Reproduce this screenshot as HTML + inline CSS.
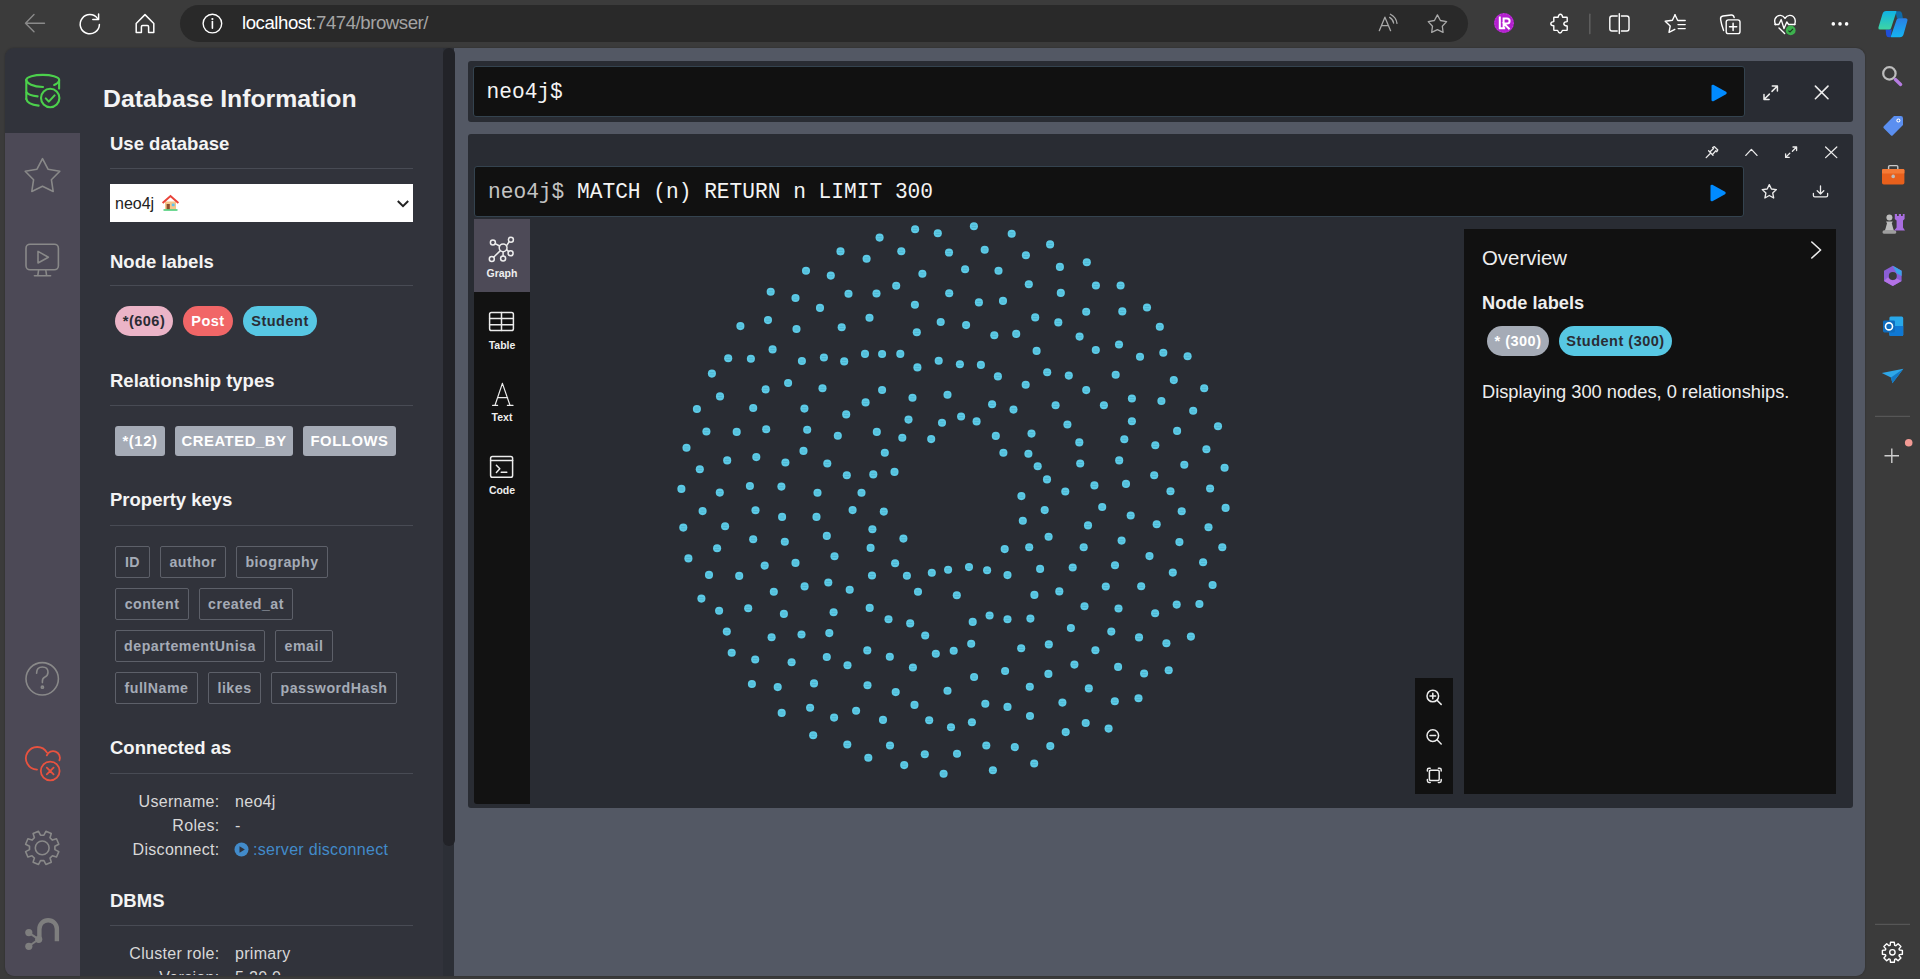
<!DOCTYPE html>
<html><head><meta charset="utf-8">
<style>
*{box-sizing:border-box}
html,body{margin:0;padding:0}
body{width:1920px;height:979px;overflow:hidden;position:relative;background:#3b3b3b;font-family:"Liberation Sans",sans-serif;color:#f4f4f4}
.a{position:absolute}
svg{position:absolute;overflow:visible}
/* chrome */
#addr{left:180px;top:5px;width:1288px;height:37px;border-radius:18.5px;background:#292929}
#url{left:242px;top:12px;font-size:18.6px;letter-spacing:-0.45px;line-height:22px;color:#fff;white-space:nowrap}
#url span{color:#a4a4a4}
/* app */
#app{left:5.2px;top:48px;width:1859.8px;height:927.5px;border-radius:9px;overflow:hidden;box-shadow:0 0 2px rgba(0,0,0,0.3)}
#mainbg{left:449px;top:0;width:1411px;height:928px;background:#535864}
#nav{left:0;top:85px;width:75px;height:843px;background:#4c4956}
#navact{left:0;top:0;width:75px;height:85px;background:#31333b}
#drawer{left:75px;top:0;width:363px;height:928px;background:#31333b}
#sbtrack{left:438px;top:0;width:11px;height:928px;background:#2c2f36}
#sbthumb{left:438px;top:0;width:11.5px;height:798px;border-radius:6px;background:#222328}
.h1{font-weight:bold;font-size:24.8px;color:#f4f4f4;white-space:nowrap}
.h2{font-weight:bold;font-size:18.5px;color:#f4f4f4;white-space:nowrap}
.hr{height:1px;background:#484b54;width:303px;left:105px}
.pill{height:30px;border-radius:15px;font-weight:bold;font-size:14.5px;letter-spacing:0.5px;line-height:30px;text-align:center;white-space:nowrap}
.rel{height:30px;border-radius:3px;font-weight:bold;font-size:14.8px;letter-spacing:0.6px;line-height:30px;text-align:center;color:#fff;background:#a5abb6;white-space:nowrap}
.key{height:31.5px;border-radius:2px;border:1px solid #5d6069;font-weight:bold;font-size:14.2px;letter-spacing:0.5px;line-height:31px;text-align:center;color:#a5abb6;white-space:nowrap}
.kv{font-size:16px;letter-spacing:0.3px;color:#d8d8d8;white-space:nowrap;line-height:20px}
.mono{font-family:"Liberation Mono",monospace;font-size:21.2px;line-height:26px;color:#f4f4f4;white-space:nowrap}
.tab{width:56px;text-align:center;font-size:10.5px;font-weight:bold;color:#eee;line-height:14px}
.kl{text-align:right;width:121.5px}
</style></head><body>
<!-- browser chrome -->
<div id="addr" class="a"></div>
<div id="url" class="a">localhost<span>:7474/browser/</span></div>

<div id="app" class="a">
  <div id="mainbg" class="a"></div>
  <div id="nav" class="a"></div>
  <div id="navact" class="a"></div>
  <div id="drawer" class="a"></div>
  <div id="sbtrack" class="a"></div>
  <div id="sbthumb" class="a"></div>
</div>

<div class="a" style="left:0;top:0;width:443px;height:975px;overflow:hidden">
<div class="a h1" style="left:103px;top:85px">Database Information</div>
<div class="a h2" style="left:110px;top:133px">Use database</div>
<div class="a hr" style="left:110px;top:168px"></div>
<div class="a" style="left:110px;top:184px;width:303px;height:38px;background:#fff"></div>
<div class="a" style="left:115px;top:194px;font-size:16px;color:#222;line-height:20px">neo4j</div>
<svg style="left:162px;top:195px" width="17" height="16" viewBox="0 0 17 16"><rect x="3" y="6.5" width="11" height="8" fill="#f6c68a"/><path d="M0.6 8 L8.5 1 L16.4 8" fill="none" stroke="#e9443a" stroke-width="2"/><rect x="4.6" y="9" width="3.2" height="5.6" fill="#8a4f2e"/><rect x="9.8" y="8.6" width="2.8" height="2.6" fill="#5ec3ee"/><rect x="1.5" y="14.2" width="14" height="1.6" fill="#4ccf7a"/></svg>
<svg style="left:396px;top:199px" width="14" height="10" viewBox="0 0 14 10"><path d="M1.8 2 L7 7.2 L12.2 2" fill="none" stroke="#222" stroke-width="2"/></svg>

<div class="a h2" style="left:110px;top:250.5px">Node labels</div>
<div class="a hr" style="left:110px;top:285px"></div>
<div class="a pill" style="left:115px;top:306px;width:58px;background:#ebb4c7;color:#2a2c34">*(606)</div>
<div class="a pill" style="left:183px;top:306px;width:50px;background:#f16667;color:#fff">Post</div>
<div class="a pill" style="left:243px;top:306px;width:74px;background:#57c7e3;color:#2a2c34">Student</div>

<div class="a h2" style="left:110px;top:370px">Relationship types</div>
<div class="a hr" style="left:110px;top:405px"></div>
<div class="a rel" style="left:115px;top:426px;width:50px">*(12)</div>
<div class="a rel" style="left:175px;top:426px;width:118px">CREATED_BY</div>
<div class="a rel" style="left:303px;top:426px;width:93px">FOLLOWS</div>

<div class="a h2" style="left:110px;top:489px">Property keys</div>
<div class="a hr" style="left:110px;top:525px"></div>
<div class="a key" style="left:115px;top:546px;width:35px">ID</div>
<div class="a key" style="left:160px;top:546px;width:66px">author</div>
<div class="a key" style="left:236px;top:546px;width:92px">biography</div>
<div class="a key" style="left:115px;top:588px;width:74px">content</div>
<div class="a key" style="left:199px;top:588px;width:94px">created_at</div>
<div class="a key" style="left:115px;top:630px;width:150px">departementUnisa</div>
<div class="a key" style="left:275px;top:630px;width:58px">email</div>
<div class="a key" style="left:115px;top:672px;width:83px">fullName</div>
<div class="a key" style="left:208px;top:672px;width:53px">likes</div>
<div class="a key" style="left:271px;top:672px;width:126px">passwordHash</div>

<div class="a h2" style="left:110px;top:737px">Connected as</div>
<div class="a hr" style="left:110px;top:773px"></div>
<div class="a kv kl" style="left:98px;top:792px">Username:</div>
<div class="a kv" style="left:235px;top:792px">neo4j</div>
<div class="a kv kl" style="left:98px;top:816px">Roles:</div>
<div class="a kv" style="left:235px;top:816px">-</div>
<div class="a kv kl" style="left:98px;top:840px">Disconnect:</div>
<svg style="left:234px;top:842px" width="15" height="15" viewBox="0 0 15 15"><circle cx="7.5" cy="7.5" r="7" fill="#428bca"/><path d="M5.5 4.2 L10.8 7.5 L5.5 10.8Z" fill="#31333b"/></svg>
<div class="a kv" style="left:253px;top:840px;color:#428bca">:server disconnect</div>

<div class="a h2" style="left:110px;top:890px">DBMS</div>
<div class="a hr" style="left:110px;top:925px"></div>
<div class="a kv kl" style="left:98px;top:944px">Cluster role:</div>
<div class="a kv" style="left:235px;top:944px">primary</div>
<div class="a kv kl" style="left:98px;top:968px">Version:</div>
<div class="a kv" style="left:235px;top:968px">5.20.0</div>

</div>
<!-- MAIN -->
<div class="a" style="left:468px;top:61px;width:1385px;height:60.5px;background:#292c33;border-radius:3px"></div>
<div class="a" style="left:473px;top:66px;width:1271.5px;height:50.5px;background:#111;border:1px solid #34434f;border-radius:3px"></div>
<div class="a mono" style="left:486.5px;top:78.5px;">neo4j$</div>
<svg style="left:1711px;top:84px" width="16" height="18" viewBox="0 0 16 18"><path d="M1.8 2 L1.8 16 L14.4 9 Z" fill="#018bff" stroke="#018bff" stroke-width="2.6" stroke-linejoin="round"/></svg>

<div class="a" style="left:468px;top:134px;width:1385px;height:674px;background:#292c33;border-radius:3px"></div>
<div class="a" style="left:474px;top:166px;width:1269.5px;height:51px;background:#111;border:1px solid #34434f;border-radius:3px"></div>
<div class="a mono" style="left:488px;top:179px;"><span style="color:#c3c3c3">neo4j$</span> MATCH (n) RETURN n LIMIT 300</div>
<svg style="left:1710px;top:184px" width="16" height="18" viewBox="0 0 16 18"><path d="M1.8 2 L1.8 16 L14.4 9 Z" fill="#018bff" stroke="#018bff" stroke-width="2.6" stroke-linejoin="round"/></svg>

<div class="a" style="left:474px;top:219px;width:56px;height:585px;background:#121212;border-radius:0 0 0 3px"></div>
<div class="a" style="left:474px;top:219px;width:56px;height:73px;background:#4d4a57"></div>
<div class="a tab" style="left:474px;top:266px">Graph</div>
<div class="a tab" style="left:474px;top:338px">Table</div>
<div class="a tab" style="left:474px;top:410px">Text</div>
<div class="a tab" style="left:474px;top:483px">Code</div>

<div class="a" style="left:1464px;top:229px;width:372px;height:565px;background:#111"></div>
<div class="a" style="left:1482px;top:245.5px;font-size:20.4px;line-height:24px;color:#eee">Overview</div>
<div class="a" style="left:1482px;top:292px;font-size:18.2px;font-weight:bold;line-height:22px;color:#eee">Node labels</div>
<div class="a pill" style="left:1487px;top:326px;width:62px;background:#a5abb6;color:#fff">* (300)</div>
<div class="a pill" style="left:1559px;top:326px;width:113px;background:#57c7e3;color:#2a2c34">Student (300)</div>
<div class="a" style="left:1482px;top:380.5px;font-size:18.25px;line-height:22px;color:#eee;white-space:nowrap">Displaying 300 nodes, 0 relationships.</div>

<div class="a" style="left:1415px;top:678px;width:38px;height:116px;background:#111"></div>

<!-- NODES -->
<svg style="left:0;top:0" width="1920" height="979" viewBox="0 0 1920 979">
<g fill="#5ccae6"><circle cx="840.5" cy="251.4" r="4.05"/><circle cx="806.0" cy="270.8" r="4.05"/><circle cx="830.8" cy="275.6" r="4.05"/><circle cx="770.7" cy="291.7" r="4.05"/><circle cx="795.5" cy="298.0" r="4.05"/><circle cx="848.5" cy="293.7" r="4.05"/><circle cx="820.0" cy="307.9" r="4.05"/><circle cx="740.4" cy="326.1" r="4.05"/><circle cx="768.0" cy="320.1" r="4.05"/><circle cx="796.5" cy="329.0" r="4.05"/><circle cx="841.7" cy="327.3" r="4.05"/><circle cx="772.6" cy="349.4" r="4.05"/><circle cx="728.2" cy="358.3" r="4.05"/><circle cx="750.9" cy="358.7" r="4.05"/><circle cx="801.9" cy="361.0" r="4.05"/><circle cx="823.9" cy="357.5" r="4.05"/><circle cx="844.2" cy="361.4" r="4.05"/><circle cx="711.9" cy="373.6" r="4.05"/><circle cx="788.1" cy="383.0" r="4.05"/><circle cx="765.6" cy="389.4" r="4.05"/><circle cx="822.5" cy="388.2" r="4.05"/><circle cx="720.0" cy="396.4" r="4.05"/><circle cx="879.6" cy="237.6" r="4.05"/><circle cx="915.1" cy="229.3" r="4.05"/><circle cx="937.8" cy="233.3" r="4.05"/><circle cx="973.9" cy="226.3" r="4.05"/><circle cx="1011.7" cy="233.7" r="4.05"/><circle cx="1050.1" cy="244.4" r="4.05"/><circle cx="901.3" cy="251.2" r="4.05"/><circle cx="866.6" cy="258.8" r="4.05"/><circle cx="949.0" cy="252.5" r="4.05"/><circle cx="984.7" cy="249.8" r="4.05"/><circle cx="1025.9" cy="255.3" r="4.05"/><circle cx="922.4" cy="273.7" r="4.05"/><circle cx="965.1" cy="269.2" r="4.05"/><circle cx="998.5" cy="270.8" r="4.05"/><circle cx="1028.8" cy="284.2" r="4.05"/><circle cx="896.2" cy="285.7" r="4.05"/><circle cx="876.5" cy="293.5" r="4.05"/><circle cx="949.2" cy="293.3" r="4.05"/><circle cx="914.9" cy="304.8" r="4.05"/><circle cx="978.9" cy="302.4" r="4.05"/><circle cx="1003.0" cy="300.9" r="4.05"/><circle cx="869.5" cy="317.8" r="4.05"/><circle cx="940.7" cy="322.0" r="4.05"/><circle cx="966.1" cy="325.1" r="4.05"/><circle cx="1035.2" cy="317.4" r="4.05"/><circle cx="916.8" cy="332.3" r="4.05"/><circle cx="994.3" cy="335.2" r="4.05"/><circle cx="1016.2" cy="333.9" r="4.05"/><circle cx="865.0" cy="353.9" r="4.05"/><circle cx="882.1" cy="354.0" r="4.05"/><circle cx="900.3" cy="353.9" r="4.05"/><circle cx="938.7" cy="360.8" r="4.05"/><circle cx="917.4" cy="367.4" r="4.05"/><circle cx="959.9" cy="364.3" r="4.05"/><circle cx="980.9" cy="364.9" r="4.05"/><circle cx="1036.6" cy="350.9" r="4.05"/><circle cx="997.9" cy="376.4" r="4.05"/><circle cx="1047.2" cy="372.3" r="4.05"/><circle cx="1025.7" cy="384.7" r="4.05"/><circle cx="882.1" cy="390.0" r="4.05"/><circle cx="912.5" cy="397.7" r="4.05"/><circle cx="947.5" cy="394.8" r="4.05"/><circle cx="865.6" cy="402.4" r="4.05"/><circle cx="992.1" cy="404.3" r="4.05"/><circle cx="1059.9" cy="266.9" r="4.05"/><circle cx="1086.8" cy="262.2" r="4.05"/><circle cx="1095.9" cy="285.5" r="4.05"/><circle cx="1120.6" cy="285.5" r="4.05"/><circle cx="1060.8" cy="292.9" r="4.05"/><circle cx="1147.0" cy="307.5" r="4.05"/><circle cx="1086.2" cy="311.7" r="4.05"/><circle cx="1122.3" cy="311.4" r="4.05"/><circle cx="1058.3" cy="322.4" r="4.05"/><circle cx="1159.8" cy="326.7" r="4.05"/><circle cx="1079.6" cy="336.6" r="4.05"/><circle cx="1119.0" cy="344.5" r="4.05"/><circle cx="1095.8" cy="350.0" r="4.05"/><circle cx="1140.0" cy="356.8" r="4.05"/><circle cx="1163.3" cy="352.7" r="4.05"/><circle cx="1187.6" cy="356.2" r="4.05"/><circle cx="1068.8" cy="375.6" r="4.05"/><circle cx="1115.7" cy="374.8" r="4.05"/><circle cx="1173.8" cy="380.1" r="4.05"/><circle cx="1086.2" cy="390.1" r="4.05"/><circle cx="1204.2" cy="388.2" r="4.05"/><circle cx="1131.9" cy="398.5" r="4.05"/><circle cx="1161.4" cy="401.0" r="4.05"/><circle cx="1103.9" cy="405.3" r="4.05"/><circle cx="1055.6" cy="405.3" r="4.05"/><circle cx="696.9" cy="409.0" r="4.05"/><circle cx="753.2" cy="408.0" r="4.05"/><circle cx="804.4" cy="408.6" r="4.05"/><circle cx="846.2" cy="414.4" r="4.05"/><circle cx="706.4" cy="431.5" r="4.05"/><circle cx="736.7" cy="431.9" r="4.05"/><circle cx="766.2" cy="429.2" r="4.05"/><circle cx="807.2" cy="429.7" r="4.05"/><circle cx="837.8" cy="435.8" r="4.05"/><circle cx="686.5" cy="447.8" r="4.05"/><circle cx="803.5" cy="450.9" r="4.05"/><circle cx="727.2" cy="460.4" r="4.05"/><circle cx="756.3" cy="457.1" r="4.05"/><circle cx="785.4" cy="462.5" r="4.05"/><circle cx="827.3" cy="463.5" r="4.05"/><circle cx="699.8" cy="469.3" r="4.05"/><circle cx="846.8" cy="475.3" r="4.05"/><circle cx="681.4" cy="488.9" r="4.05"/><circle cx="719.8" cy="492.6" r="4.05"/><circle cx="749.9" cy="486.0" r="4.05"/><circle cx="781.4" cy="486.6" r="4.05"/><circle cx="817.5" cy="492.8" r="4.05"/><circle cx="861.5" cy="492.8" r="4.05"/><circle cx="702.6" cy="511.1" r="4.05"/><circle cx="755.5" cy="510.3" r="4.05"/><circle cx="782.1" cy="516.9" r="4.05"/><circle cx="816.5" cy="516.9" r="4.05"/><circle cx="852.6" cy="510.1" r="4.05"/><circle cx="683.3" cy="527.6" r="4.05"/><circle cx="725.1" cy="526.2" r="4.05"/><circle cx="753.2" cy="539.2" r="4.05"/><circle cx="784.8" cy="541.7" r="4.05"/><circle cx="826.8" cy="535.9" r="4.05"/><circle cx="717.1" cy="548.3" r="4.05"/><circle cx="688.4" cy="558.4" r="4.05"/><circle cx="764.7" cy="565.6" r="4.05"/><circle cx="795.5" cy="562.9" r="4.05"/><circle cx="834.5" cy="556.3" r="4.05"/><circle cx="709.0" cy="574.9" r="4.05"/><circle cx="739.2" cy="575.9" r="4.05"/><circle cx="773.8" cy="591.8" r="4.05"/><circle cx="804.6" cy="586.4" r="4.05"/><circle cx="828.3" cy="582.5" r="4.05"/><circle cx="849.7" cy="589.8" r="4.05"/><circle cx="1013.5" cy="409.6" r="4.05"/><circle cx="908.5" cy="419.6" r="4.05"/><circle cx="942.0" cy="422.7" r="4.05"/><circle cx="961.1" cy="416.5" r="4.05"/><circle cx="976.6" cy="421.4" r="4.05"/><circle cx="876.8" cy="431.9" r="4.05"/><circle cx="902.3" cy="437.7" r="4.05"/><circle cx="931.2" cy="439.1" r="4.05"/><circle cx="995.8" cy="435.9" r="4.05"/><circle cx="1031.5" cy="433.6" r="4.05"/><circle cx="884.8" cy="452.8" r="4.05"/><circle cx="1003.4" cy="452.8" r="4.05"/><circle cx="1028.4" cy="453.8" r="4.05"/><circle cx="1037.7" cy="466.2" r="4.05"/><circle cx="873.3" cy="474.4" r="4.05"/><circle cx="894.5" cy="471.9" r="4.05"/><circle cx="1047.0" cy="479.4" r="4.05"/><circle cx="1021.4" cy="496.1" r="4.05"/><circle cx="883.8" cy="511.6" r="4.05"/><circle cx="1044.7" cy="510.1" r="4.05"/><circle cx="1022.8" cy="520.8" r="4.05"/><circle cx="872.4" cy="529.3" r="4.05"/><circle cx="903.4" cy="538.6" r="4.05"/><circle cx="1048.6" cy="536.7" r="4.05"/><circle cx="870.6" cy="547.9" r="4.05"/><circle cx="1004.7" cy="549.1" r="4.05"/><circle cx="1029.2" cy="547.2" r="4.05"/><circle cx="895.1" cy="563.3" r="4.05"/><circle cx="872.0" cy="575.5" r="4.05"/><circle cx="906.9" cy="575.7" r="4.05"/><circle cx="931.8" cy="572.8" r="4.05"/><circle cx="948.1" cy="569.7" r="4.05"/><circle cx="969.0" cy="567.1" r="4.05"/><circle cx="987.1" cy="570.2" r="4.05"/><circle cx="1007.5" cy="575.1" r="4.05"/><circle cx="1040.1" cy="568.9" r="4.05"/><circle cx="918.0" cy="591.8" r="4.05"/><circle cx="956.8" cy="595.3" r="4.05"/><circle cx="1034.4" cy="594.9" r="4.05"/><circle cx="1193.2" cy="410.7" r="4.05"/><circle cx="1067.4" cy="424.5" r="4.05"/><circle cx="1131.9" cy="421.2" r="4.05"/><circle cx="1177.1" cy="430.9" r="4.05"/><circle cx="1218.0" cy="426.2" r="4.05"/><circle cx="1079.3" cy="442.4" r="4.05"/><circle cx="1124.3" cy="439.2" r="4.05"/><circle cx="1155.3" cy="445.3" r="4.05"/><circle cx="1206.4" cy="449.3" r="4.05"/><circle cx="1080.2" cy="463.5" r="4.05"/><circle cx="1119.2" cy="460.4" r="4.05"/><circle cx="1184.3" cy="464.7" r="4.05"/><circle cx="1224.6" cy="467.8" r="4.05"/><circle cx="1154.2" cy="475.3" r="4.05"/><circle cx="1094.4" cy="485.4" r="4.05"/><circle cx="1126.0" cy="483.9" r="4.05"/><circle cx="1065.3" cy="491.5" r="4.05"/><circle cx="1170.5" cy="491.3" r="4.05"/><circle cx="1210.1" cy="488.5" r="4.05"/><circle cx="1102.2" cy="507.0" r="4.05"/><circle cx="1130.7" cy="515.5" r="4.05"/><circle cx="1181.7" cy="511.2" r="4.05"/><circle cx="1225.6" cy="507.9" r="4.05"/><circle cx="1088.0" cy="525.4" r="4.05"/><circle cx="1156.7" cy="524.3" r="4.05"/><circle cx="1208.5" cy="527.2" r="4.05"/><circle cx="1121.6" cy="540.6" r="4.05"/><circle cx="1083.7" cy="547.2" r="4.05"/><circle cx="1179.4" cy="542.1" r="4.05"/><circle cx="1222.3" cy="547.2" r="4.05"/><circle cx="1149.5" cy="556.1" r="4.05"/><circle cx="1203.1" cy="562.3" r="4.05"/><circle cx="1072.7" cy="567.5" r="4.05"/><circle cx="1115.0" cy="565.2" r="4.05"/><circle cx="1172.8" cy="572.6" r="4.05"/><circle cx="1105.8" cy="586.5" r="4.05"/><circle cx="1141.2" cy="586.2" r="4.05"/><circle cx="1212.6" cy="585.0" r="4.05"/><circle cx="1059.3" cy="591.4" r="4.05"/><circle cx="701.4" cy="598.6" r="4.05"/><circle cx="719.1" cy="610.8" r="4.05"/><circle cx="748.2" cy="608.3" r="4.05"/><circle cx="783.9" cy="613.9" r="4.05"/><circle cx="833.6" cy="612.2" r="4.05"/><circle cx="726.8" cy="631.6" r="4.05"/><circle cx="771.6" cy="637.2" r="4.05"/><circle cx="801.5" cy="634.5" r="4.05"/><circle cx="829.3" cy="633.1" r="4.05"/><circle cx="731.7" cy="652.7" r="4.05"/><circle cx="755.2" cy="659.5" r="4.05"/><circle cx="791.6" cy="662.2" r="4.05"/><circle cx="826.8" cy="657.0" r="4.05"/><circle cx="847.5" cy="665.2" r="4.05"/><circle cx="751.9" cy="684.0" r="4.05"/><circle cx="777.7" cy="687.1" r="4.05"/><circle cx="814.0" cy="683.4" r="4.05"/><circle cx="781.7" cy="712.9" r="4.05"/><circle cx="810.1" cy="707.7" r="4.05"/><circle cx="834.1" cy="717.6" r="4.05"/><circle cx="856.1" cy="710.8" r="4.05"/><circle cx="813.2" cy="735.2" r="4.05"/><circle cx="847.3" cy="744.5" r="4.05"/><circle cx="869.7" cy="607.9" r="4.05"/><circle cx="888.5" cy="619.3" r="4.05"/><circle cx="910.2" cy="623.4" r="4.05"/><circle cx="925.2" cy="635.5" r="4.05"/><circle cx="972.7" cy="621.9" r="4.05"/><circle cx="989.6" cy="615.5" r="4.05"/><circle cx="1007.5" cy="619.3" r="4.05"/><circle cx="1030.4" cy="618.6" r="4.05"/><circle cx="867.3" cy="650.4" r="4.05"/><circle cx="889.8" cy="656.8" r="4.05"/><circle cx="912.9" cy="667.5" r="4.05"/><circle cx="935.8" cy="653.7" r="4.05"/><circle cx="953.7" cy="650.8" r="4.05"/><circle cx="971.2" cy="643.8" r="4.05"/><circle cx="1021.2" cy="648.3" r="4.05"/><circle cx="1048.8" cy="644.4" r="4.05"/><circle cx="867.5" cy="685.3" r="4.05"/><circle cx="895.7" cy="692.1" r="4.05"/><circle cx="947.5" cy="690.8" r="4.05"/><circle cx="974.1" cy="677.0" r="4.05"/><circle cx="1005.1" cy="671.0" r="4.05"/><circle cx="1029.8" cy="686.7" r="4.05"/><circle cx="1048.4" cy="673.9" r="4.05"/><circle cx="914.5" cy="704.9" r="4.05"/><circle cx="985.3" cy="703.8" r="4.05"/><circle cx="1007.5" cy="706.9" r="4.05"/><circle cx="883.0" cy="719.9" r="4.05"/><circle cx="929.2" cy="720.3" r="4.05"/><circle cx="951.0" cy="727.3" r="4.05"/><circle cx="971.9" cy="722.2" r="4.05"/><circle cx="1030.0" cy="716.0" r="4.05"/><circle cx="890.0" cy="745.5" r="4.05"/><circle cx="868.3" cy="757.7" r="4.05"/><circle cx="924.8" cy="754.2" r="4.05"/><circle cx="957.0" cy="753.8" r="4.05"/><circle cx="986.3" cy="745.5" r="4.05"/><circle cx="1014.8" cy="747.1" r="4.05"/><circle cx="1050.3" cy="746.1" r="4.05"/><circle cx="904.2" cy="765.1" r="4.05"/><circle cx="943.6" cy="773.8" r="4.05"/><circle cx="992.9" cy="770.3" r="4.05"/><circle cx="1034.2" cy="763.5" r="4.05"/><circle cx="1084.5" cy="606.3" r="4.05"/><circle cx="1118.5" cy="608.5" r="4.05"/><circle cx="1155.1" cy="613.3" r="4.05"/><circle cx="1176.7" cy="604.6" r="4.05"/><circle cx="1199.4" cy="604.0" r="4.05"/><circle cx="1070.9" cy="628.1" r="4.05"/><circle cx="1111.3" cy="631.6" r="4.05"/><circle cx="1139.0" cy="637.4" r="4.05"/><circle cx="1166.4" cy="643.2" r="4.05"/><circle cx="1190.9" cy="636.6" r="4.05"/><circle cx="1095.4" cy="650.2" r="4.05"/><circle cx="1074.4" cy="664.6" r="4.05"/><circle cx="1118.1" cy="666.9" r="4.05"/><circle cx="1144.1" cy="673.5" r="4.05"/><circle cx="1168.7" cy="670.2" r="4.05"/><circle cx="1088.8" cy="688.4" r="4.05"/><circle cx="1062.4" cy="702.6" r="4.05"/><circle cx="1114.8" cy="701.2" r="4.05"/><circle cx="1138.5" cy="698.3" r="4.05"/><circle cx="1085.7" cy="723.0" r="4.05"/><circle cx="1065.7" cy="732.1" r="4.05"/><circle cx="1108.6" cy="728.6" r="4.05"/></g>
<g stroke="#3a8aa2" stroke-width="0.7" opacity="0.4"><path d="M838.3 250.4 h4.4 M838.3 252.6 h4.4"/><path d="M803.8 269.8 h4.4 M803.8 272.0 h4.4"/><path d="M828.6 274.6 h4.4 M828.6 276.8 h4.4"/><path d="M768.5 290.7 h4.4 M768.5 292.9 h4.4"/><path d="M793.3 297.0 h4.4 M793.3 299.2 h4.4"/><path d="M846.3 292.7 h4.4 M846.3 294.9 h4.4"/><path d="M817.8 306.9 h4.4 M817.8 309.1 h4.4"/><path d="M738.2 325.1 h4.4 M738.2 327.3 h4.4"/><path d="M765.8 319.1 h4.4 M765.8 321.3 h4.4"/><path d="M794.3 328.0 h4.4 M794.3 330.2 h4.4"/><path d="M839.5 326.3 h4.4 M839.5 328.5 h4.4"/><path d="M770.4 348.4 h4.4 M770.4 350.6 h4.4"/><path d="M726.0 357.3 h4.4 M726.0 359.5 h4.4"/><path d="M748.7 357.7 h4.4 M748.7 359.9 h4.4"/><path d="M799.7 360.0 h4.4 M799.7 362.2 h4.4"/><path d="M821.7 356.5 h4.4 M821.7 358.7 h4.4"/><path d="M842.0 360.4 h4.4 M842.0 362.6 h4.4"/><path d="M709.7 372.6 h4.4 M709.7 374.8 h4.4"/><path d="M785.9 382.0 h4.4 M785.9 384.2 h4.4"/><path d="M763.4 388.4 h4.4 M763.4 390.6 h4.4"/><path d="M820.3 387.2 h4.4 M820.3 389.4 h4.4"/><path d="M717.8 395.4 h4.4 M717.8 397.6 h4.4"/><path d="M877.4 236.6 h4.4 M877.4 238.8 h4.4"/><path d="M912.9 228.3 h4.4 M912.9 230.5 h4.4"/><path d="M935.6 232.3 h4.4 M935.6 234.5 h4.4"/><path d="M971.7 225.3 h4.4 M971.7 227.5 h4.4"/><path d="M1009.5 232.7 h4.4 M1009.5 234.9 h4.4"/><path d="M1047.9 243.4 h4.4 M1047.9 245.6 h4.4"/><path d="M899.1 250.2 h4.4 M899.1 252.4 h4.4"/><path d="M864.4 257.8 h4.4 M864.4 260.0 h4.4"/><path d="M946.8 251.5 h4.4 M946.8 253.7 h4.4"/><path d="M982.5 248.8 h4.4 M982.5 251.0 h4.4"/><path d="M1023.7 254.3 h4.4 M1023.7 256.5 h4.4"/><path d="M920.2 272.7 h4.4 M920.2 274.9 h4.4"/><path d="M962.9 268.2 h4.4 M962.9 270.4 h4.4"/><path d="M996.3 269.8 h4.4 M996.3 272.0 h4.4"/><path d="M1026.6 283.2 h4.4 M1026.6 285.4 h4.4"/><path d="M894.0 284.7 h4.4 M894.0 286.9 h4.4"/><path d="M874.3 292.5 h4.4 M874.3 294.7 h4.4"/><path d="M947.0 292.3 h4.4 M947.0 294.5 h4.4"/><path d="M912.7 303.8 h4.4 M912.7 306.0 h4.4"/><path d="M976.7 301.4 h4.4 M976.7 303.6 h4.4"/><path d="M1000.8 299.9 h4.4 M1000.8 302.1 h4.4"/><path d="M867.3 316.8 h4.4 M867.3 319.0 h4.4"/><path d="M938.5 321.0 h4.4 M938.5 323.2 h4.4"/><path d="M963.9 324.1 h4.4 M963.9 326.3 h4.4"/><path d="M1033.0 316.4 h4.4 M1033.0 318.6 h4.4"/><path d="M914.6 331.3 h4.4 M914.6 333.5 h4.4"/><path d="M992.1 334.2 h4.4 M992.1 336.4 h4.4"/><path d="M1014.0 332.9 h4.4 M1014.0 335.1 h4.4"/><path d="M862.8 352.9 h4.4 M862.8 355.1 h4.4"/><path d="M879.9 353.0 h4.4 M879.9 355.2 h4.4"/><path d="M898.1 352.9 h4.4 M898.1 355.1 h4.4"/><path d="M936.5 359.8 h4.4 M936.5 362.0 h4.4"/><path d="M915.2 366.4 h4.4 M915.2 368.6 h4.4"/><path d="M957.7 363.3 h4.4 M957.7 365.5 h4.4"/><path d="M978.7 363.9 h4.4 M978.7 366.1 h4.4"/><path d="M1034.4 349.9 h4.4 M1034.4 352.1 h4.4"/><path d="M995.7 375.4 h4.4 M995.7 377.6 h4.4"/><path d="M1045.0 371.3 h4.4 M1045.0 373.5 h4.4"/><path d="M1023.5 383.7 h4.4 M1023.5 385.9 h4.4"/><path d="M879.9 389.0 h4.4 M879.9 391.2 h4.4"/><path d="M910.3 396.7 h4.4 M910.3 398.9 h4.4"/><path d="M945.3 393.8 h4.4 M945.3 396.0 h4.4"/><path d="M863.4 401.4 h4.4 M863.4 403.6 h4.4"/><path d="M989.9 403.3 h4.4 M989.9 405.5 h4.4"/><path d="M1057.7 265.9 h4.4 M1057.7 268.1 h4.4"/><path d="M1084.6 261.2 h4.4 M1084.6 263.4 h4.4"/><path d="M1093.7 284.5 h4.4 M1093.7 286.7 h4.4"/><path d="M1118.4 284.5 h4.4 M1118.4 286.7 h4.4"/><path d="M1058.6 291.9 h4.4 M1058.6 294.1 h4.4"/><path d="M1144.8 306.5 h4.4 M1144.8 308.7 h4.4"/><path d="M1084.0 310.7 h4.4 M1084.0 312.9 h4.4"/><path d="M1120.1 310.4 h4.4 M1120.1 312.6 h4.4"/><path d="M1056.1 321.4 h4.4 M1056.1 323.6 h4.4"/><path d="M1157.6 325.7 h4.4 M1157.6 327.9 h4.4"/><path d="M1077.4 335.6 h4.4 M1077.4 337.8 h4.4"/><path d="M1116.8 343.5 h4.4 M1116.8 345.7 h4.4"/><path d="M1093.6 349.0 h4.4 M1093.6 351.2 h4.4"/><path d="M1137.8 355.8 h4.4 M1137.8 358.0 h4.4"/><path d="M1161.1 351.7 h4.4 M1161.1 353.9 h4.4"/><path d="M1185.4 355.2 h4.4 M1185.4 357.4 h4.4"/><path d="M1066.6 374.6 h4.4 M1066.6 376.8 h4.4"/><path d="M1113.5 373.8 h4.4 M1113.5 376.0 h4.4"/><path d="M1171.6 379.1 h4.4 M1171.6 381.3 h4.4"/><path d="M1084.0 389.1 h4.4 M1084.0 391.3 h4.4"/><path d="M1202.0 387.2 h4.4 M1202.0 389.4 h4.4"/><path d="M1129.7 397.5 h4.4 M1129.7 399.7 h4.4"/><path d="M1159.2 400.0 h4.4 M1159.2 402.2 h4.4"/><path d="M1101.7 404.3 h4.4 M1101.7 406.5 h4.4"/><path d="M1053.4 404.3 h4.4 M1053.4 406.5 h4.4"/><path d="M694.7 408.0 h4.4 M694.7 410.2 h4.4"/><path d="M751.0 407.0 h4.4 M751.0 409.2 h4.4"/><path d="M802.2 407.6 h4.4 M802.2 409.8 h4.4"/><path d="M844.0 413.4 h4.4 M844.0 415.6 h4.4"/><path d="M704.2 430.5 h4.4 M704.2 432.7 h4.4"/><path d="M734.5 430.9 h4.4 M734.5 433.1 h4.4"/><path d="M764.0 428.2 h4.4 M764.0 430.4 h4.4"/><path d="M805.0 428.7 h4.4 M805.0 430.9 h4.4"/><path d="M835.6 434.8 h4.4 M835.6 437.0 h4.4"/><path d="M684.3 446.8 h4.4 M684.3 449.0 h4.4"/><path d="M801.3 449.9 h4.4 M801.3 452.1 h4.4"/><path d="M725.0 459.4 h4.4 M725.0 461.6 h4.4"/><path d="M754.1 456.1 h4.4 M754.1 458.3 h4.4"/><path d="M783.2 461.5 h4.4 M783.2 463.7 h4.4"/><path d="M825.1 462.5 h4.4 M825.1 464.7 h4.4"/><path d="M697.6 468.3 h4.4 M697.6 470.5 h4.4"/><path d="M844.6 474.3 h4.4 M844.6 476.5 h4.4"/><path d="M679.2 487.9 h4.4 M679.2 490.1 h4.4"/><path d="M717.6 491.6 h4.4 M717.6 493.8 h4.4"/><path d="M747.7 485.0 h4.4 M747.7 487.2 h4.4"/><path d="M779.2 485.6 h4.4 M779.2 487.8 h4.4"/><path d="M815.3 491.8 h4.4 M815.3 494.0 h4.4"/><path d="M859.3 491.8 h4.4 M859.3 494.0 h4.4"/><path d="M700.4 510.1 h4.4 M700.4 512.3 h4.4"/><path d="M753.3 509.3 h4.4 M753.3 511.5 h4.4"/><path d="M779.9 515.9 h4.4 M779.9 518.1 h4.4"/><path d="M814.3 515.9 h4.4 M814.3 518.1 h4.4"/><path d="M850.4 509.1 h4.4 M850.4 511.3 h4.4"/><path d="M681.1 526.6 h4.4 M681.1 528.8 h4.4"/><path d="M722.9 525.2 h4.4 M722.9 527.4 h4.4"/><path d="M751.0 538.2 h4.4 M751.0 540.4 h4.4"/><path d="M782.6 540.7 h4.4 M782.6 542.9 h4.4"/><path d="M824.6 534.9 h4.4 M824.6 537.1 h4.4"/><path d="M714.9 547.3 h4.4 M714.9 549.5 h4.4"/><path d="M686.2 557.4 h4.4 M686.2 559.6 h4.4"/><path d="M762.5 564.6 h4.4 M762.5 566.8 h4.4"/><path d="M793.3 561.9 h4.4 M793.3 564.1 h4.4"/><path d="M832.3 555.3 h4.4 M832.3 557.5 h4.4"/><path d="M706.8 573.9 h4.4 M706.8 576.1 h4.4"/><path d="M737.0 574.9 h4.4 M737.0 577.1 h4.4"/><path d="M771.6 590.8 h4.4 M771.6 593.0 h4.4"/><path d="M802.4 585.4 h4.4 M802.4 587.6 h4.4"/><path d="M826.1 581.5 h4.4 M826.1 583.7 h4.4"/><path d="M847.5 588.8 h4.4 M847.5 591.0 h4.4"/><path d="M1011.3 408.6 h4.4 M1011.3 410.8 h4.4"/><path d="M906.3 418.6 h4.4 M906.3 420.8 h4.4"/><path d="M939.8 421.7 h4.4 M939.8 423.9 h4.4"/><path d="M958.9 415.5 h4.4 M958.9 417.7 h4.4"/><path d="M974.4 420.4 h4.4 M974.4 422.6 h4.4"/><path d="M874.6 430.9 h4.4 M874.6 433.1 h4.4"/><path d="M900.1 436.7 h4.4 M900.1 438.9 h4.4"/><path d="M929.0 438.1 h4.4 M929.0 440.3 h4.4"/><path d="M993.6 434.9 h4.4 M993.6 437.1 h4.4"/><path d="M1029.3 432.6 h4.4 M1029.3 434.8 h4.4"/><path d="M882.6 451.8 h4.4 M882.6 454.0 h4.4"/><path d="M1001.2 451.8 h4.4 M1001.2 454.0 h4.4"/><path d="M1026.2 452.8 h4.4 M1026.2 455.0 h4.4"/><path d="M1035.5 465.2 h4.4 M1035.5 467.4 h4.4"/><path d="M871.1 473.4 h4.4 M871.1 475.6 h4.4"/><path d="M892.3 470.9 h4.4 M892.3 473.1 h4.4"/><path d="M1044.8 478.4 h4.4 M1044.8 480.6 h4.4"/><path d="M1019.2 495.1 h4.4 M1019.2 497.3 h4.4"/><path d="M881.6 510.6 h4.4 M881.6 512.8 h4.4"/><path d="M1042.5 509.1 h4.4 M1042.5 511.3 h4.4"/><path d="M1020.6 519.8 h4.4 M1020.6 522.0 h4.4"/><path d="M870.2 528.3 h4.4 M870.2 530.5 h4.4"/><path d="M901.2 537.6 h4.4 M901.2 539.8 h4.4"/><path d="M1046.4 535.7 h4.4 M1046.4 537.9 h4.4"/><path d="M868.4 546.9 h4.4 M868.4 549.1 h4.4"/><path d="M1002.5 548.1 h4.4 M1002.5 550.3 h4.4"/><path d="M1027.0 546.2 h4.4 M1027.0 548.4 h4.4"/><path d="M892.9 562.3 h4.4 M892.9 564.5 h4.4"/><path d="M869.8 574.5 h4.4 M869.8 576.7 h4.4"/><path d="M904.7 574.7 h4.4 M904.7 576.9 h4.4"/><path d="M929.6 571.8 h4.4 M929.6 574.0 h4.4"/><path d="M945.9 568.7 h4.4 M945.9 570.9 h4.4"/><path d="M966.8 566.1 h4.4 M966.8 568.3 h4.4"/><path d="M984.9 569.2 h4.4 M984.9 571.4 h4.4"/><path d="M1005.3 574.1 h4.4 M1005.3 576.3 h4.4"/><path d="M1037.9 567.9 h4.4 M1037.9 570.1 h4.4"/><path d="M915.8 590.8 h4.4 M915.8 593.0 h4.4"/><path d="M954.6 594.3 h4.4 M954.6 596.5 h4.4"/><path d="M1032.2 593.9 h4.4 M1032.2 596.1 h4.4"/><path d="M1191.0 409.7 h4.4 M1191.0 411.9 h4.4"/><path d="M1065.2 423.5 h4.4 M1065.2 425.7 h4.4"/><path d="M1129.7 420.2 h4.4 M1129.7 422.4 h4.4"/><path d="M1174.9 429.9 h4.4 M1174.9 432.1 h4.4"/><path d="M1215.8 425.2 h4.4 M1215.8 427.4 h4.4"/><path d="M1077.1 441.4 h4.4 M1077.1 443.6 h4.4"/><path d="M1122.1 438.2 h4.4 M1122.1 440.4 h4.4"/><path d="M1153.1 444.3 h4.4 M1153.1 446.5 h4.4"/><path d="M1204.2 448.3 h4.4 M1204.2 450.5 h4.4"/><path d="M1078.0 462.5 h4.4 M1078.0 464.7 h4.4"/><path d="M1117.0 459.4 h4.4 M1117.0 461.6 h4.4"/><path d="M1182.1 463.7 h4.4 M1182.1 465.9 h4.4"/><path d="M1222.4 466.8 h4.4 M1222.4 469.0 h4.4"/><path d="M1152.0 474.3 h4.4 M1152.0 476.5 h4.4"/><path d="M1092.2 484.4 h4.4 M1092.2 486.6 h4.4"/><path d="M1123.8 482.9 h4.4 M1123.8 485.1 h4.4"/><path d="M1063.1 490.5 h4.4 M1063.1 492.7 h4.4"/><path d="M1168.3 490.3 h4.4 M1168.3 492.5 h4.4"/><path d="M1207.9 487.5 h4.4 M1207.9 489.7 h4.4"/><path d="M1100.0 506.0 h4.4 M1100.0 508.2 h4.4"/><path d="M1128.5 514.5 h4.4 M1128.5 516.7 h4.4"/><path d="M1179.5 510.2 h4.4 M1179.5 512.4 h4.4"/><path d="M1223.4 506.9 h4.4 M1223.4 509.1 h4.4"/><path d="M1085.8 524.4 h4.4 M1085.8 526.6 h4.4"/><path d="M1154.5 523.3 h4.4 M1154.5 525.5 h4.4"/><path d="M1206.3 526.2 h4.4 M1206.3 528.4 h4.4"/><path d="M1119.4 539.6 h4.4 M1119.4 541.8 h4.4"/><path d="M1081.5 546.2 h4.4 M1081.5 548.4 h4.4"/><path d="M1177.2 541.1 h4.4 M1177.2 543.3 h4.4"/><path d="M1220.1 546.2 h4.4 M1220.1 548.4 h4.4"/><path d="M1147.3 555.1 h4.4 M1147.3 557.3 h4.4"/><path d="M1200.9 561.3 h4.4 M1200.9 563.5 h4.4"/><path d="M1070.5 566.5 h4.4 M1070.5 568.7 h4.4"/><path d="M1112.8 564.2 h4.4 M1112.8 566.4 h4.4"/><path d="M1170.6 571.6 h4.4 M1170.6 573.8 h4.4"/><path d="M1103.6 585.5 h4.4 M1103.6 587.7 h4.4"/><path d="M1139.0 585.2 h4.4 M1139.0 587.4 h4.4"/><path d="M1210.4 584.0 h4.4 M1210.4 586.2 h4.4"/><path d="M1057.1 590.4 h4.4 M1057.1 592.6 h4.4"/><path d="M699.2 597.6 h4.4 M699.2 599.8 h4.4"/><path d="M716.9 609.8 h4.4 M716.9 612.0 h4.4"/><path d="M746.0 607.3 h4.4 M746.0 609.5 h4.4"/><path d="M781.7 612.9 h4.4 M781.7 615.1 h4.4"/><path d="M831.4 611.2 h4.4 M831.4 613.4 h4.4"/><path d="M724.6 630.6 h4.4 M724.6 632.8 h4.4"/><path d="M769.4 636.2 h4.4 M769.4 638.4 h4.4"/><path d="M799.3 633.5 h4.4 M799.3 635.7 h4.4"/><path d="M827.1 632.1 h4.4 M827.1 634.3 h4.4"/><path d="M729.5 651.7 h4.4 M729.5 653.9 h4.4"/><path d="M753.0 658.5 h4.4 M753.0 660.7 h4.4"/><path d="M789.4 661.2 h4.4 M789.4 663.4 h4.4"/><path d="M824.6 656.0 h4.4 M824.6 658.2 h4.4"/><path d="M845.3 664.2 h4.4 M845.3 666.4 h4.4"/><path d="M749.7 683.0 h4.4 M749.7 685.2 h4.4"/><path d="M775.5 686.1 h4.4 M775.5 688.3 h4.4"/><path d="M811.8 682.4 h4.4 M811.8 684.6 h4.4"/><path d="M779.5 711.9 h4.4 M779.5 714.1 h4.4"/><path d="M807.9 706.7 h4.4 M807.9 708.9 h4.4"/><path d="M831.9 716.6 h4.4 M831.9 718.8 h4.4"/><path d="M853.9 709.8 h4.4 M853.9 712.0 h4.4"/><path d="M811.0 734.2 h4.4 M811.0 736.4 h4.4"/><path d="M845.1 743.5 h4.4 M845.1 745.7 h4.4"/><path d="M867.5 606.9 h4.4 M867.5 609.1 h4.4"/><path d="M886.3 618.3 h4.4 M886.3 620.5 h4.4"/><path d="M908.0 622.4 h4.4 M908.0 624.6 h4.4"/><path d="M923.0 634.5 h4.4 M923.0 636.7 h4.4"/><path d="M970.5 620.9 h4.4 M970.5 623.1 h4.4"/><path d="M987.4 614.5 h4.4 M987.4 616.7 h4.4"/><path d="M1005.3 618.3 h4.4 M1005.3 620.5 h4.4"/><path d="M1028.2 617.6 h4.4 M1028.2 619.8 h4.4"/><path d="M865.1 649.4 h4.4 M865.1 651.6 h4.4"/><path d="M887.6 655.8 h4.4 M887.6 658.0 h4.4"/><path d="M910.7 666.5 h4.4 M910.7 668.7 h4.4"/><path d="M933.6 652.7 h4.4 M933.6 654.9 h4.4"/><path d="M951.5 649.8 h4.4 M951.5 652.0 h4.4"/><path d="M969.0 642.8 h4.4 M969.0 645.0 h4.4"/><path d="M1019.0 647.3 h4.4 M1019.0 649.5 h4.4"/><path d="M1046.6 643.4 h4.4 M1046.6 645.6 h4.4"/><path d="M865.3 684.3 h4.4 M865.3 686.5 h4.4"/><path d="M893.5 691.1 h4.4 M893.5 693.3 h4.4"/><path d="M945.3 689.8 h4.4 M945.3 692.0 h4.4"/><path d="M971.9 676.0 h4.4 M971.9 678.2 h4.4"/><path d="M1002.9 670.0 h4.4 M1002.9 672.2 h4.4"/><path d="M1027.6 685.7 h4.4 M1027.6 687.9 h4.4"/><path d="M1046.2 672.9 h4.4 M1046.2 675.1 h4.4"/><path d="M912.3 703.9 h4.4 M912.3 706.1 h4.4"/><path d="M983.1 702.8 h4.4 M983.1 705.0 h4.4"/><path d="M1005.3 705.9 h4.4 M1005.3 708.1 h4.4"/><path d="M880.8 718.9 h4.4 M880.8 721.1 h4.4"/><path d="M927.0 719.3 h4.4 M927.0 721.5 h4.4"/><path d="M948.8 726.3 h4.4 M948.8 728.5 h4.4"/><path d="M969.7 721.2 h4.4 M969.7 723.4 h4.4"/><path d="M1027.8 715.0 h4.4 M1027.8 717.2 h4.4"/><path d="M887.8 744.5 h4.4 M887.8 746.7 h4.4"/><path d="M866.1 756.7 h4.4 M866.1 758.9 h4.4"/><path d="M922.6 753.2 h4.4 M922.6 755.4 h4.4"/><path d="M954.8 752.8 h4.4 M954.8 755.0 h4.4"/><path d="M984.1 744.5 h4.4 M984.1 746.7 h4.4"/><path d="M1012.6 746.1 h4.4 M1012.6 748.3 h4.4"/><path d="M1048.1 745.1 h4.4 M1048.1 747.3 h4.4"/><path d="M902.0 764.1 h4.4 M902.0 766.3 h4.4"/><path d="M941.4 772.8 h4.4 M941.4 775.0 h4.4"/><path d="M990.7 769.3 h4.4 M990.7 771.5 h4.4"/><path d="M1032.0 762.5 h4.4 M1032.0 764.7 h4.4"/><path d="M1082.3 605.3 h4.4 M1082.3 607.5 h4.4"/><path d="M1116.3 607.5 h4.4 M1116.3 609.7 h4.4"/><path d="M1152.9 612.3 h4.4 M1152.9 614.5 h4.4"/><path d="M1174.5 603.6 h4.4 M1174.5 605.8 h4.4"/><path d="M1197.2 603.0 h4.4 M1197.2 605.2 h4.4"/><path d="M1068.7 627.1 h4.4 M1068.7 629.3 h4.4"/><path d="M1109.1 630.6 h4.4 M1109.1 632.8 h4.4"/><path d="M1136.8 636.4 h4.4 M1136.8 638.6 h4.4"/><path d="M1164.2 642.2 h4.4 M1164.2 644.4 h4.4"/><path d="M1188.7 635.6 h4.4 M1188.7 637.8 h4.4"/><path d="M1093.2 649.2 h4.4 M1093.2 651.4 h4.4"/><path d="M1072.2 663.6 h4.4 M1072.2 665.8 h4.4"/><path d="M1115.9 665.9 h4.4 M1115.9 668.1 h4.4"/><path d="M1141.9 672.5 h4.4 M1141.9 674.7 h4.4"/><path d="M1166.5 669.2 h4.4 M1166.5 671.4 h4.4"/><path d="M1086.6 687.4 h4.4 M1086.6 689.6 h4.4"/><path d="M1060.2 701.6 h4.4 M1060.2 703.8 h4.4"/><path d="M1112.6 700.2 h4.4 M1112.6 702.4 h4.4"/><path d="M1136.3 697.3 h4.4 M1136.3 699.5 h4.4"/><path d="M1083.5 722.0 h4.4 M1083.5 724.2 h4.4"/><path d="M1063.5 731.1 h4.4 M1063.5 733.3 h4.4"/><path d="M1106.4 727.6 h4.4 M1106.4 729.8 h4.4"/></g>
</svg>
<!-- NAV ICONS -->
<svg style="left:0;top:0" width="1920" height="979" viewBox="0 0 1920 979">
<g fill="none" stroke-linecap="round" stroke-linejoin="round">
 <!-- db icon -->
 <g stroke="#4cd04c" stroke-width="2.1">
  <path d="M26.3 80 C26.3 73.2 59.2 73.2 59.2 80"/>
  <path d="M26.3 80 C26.8 83.6 33 86.6 43 87"/>
  <path d="M54.2 85 C56.6 84 58.4 82.6 59 81"/>
  <path d="M59.1 80 V88.6"/>
  <path d="M26.3 80 V99"/>
  <path d="M26.6 92.4 C28 94.6 32 95.8 37.6 96.4"/>
  <path d="M26.3 99 C27 103 32 104.8 38.6 105.6"/>
  <circle cx="50.2" cy="98" r="9.2"/>
  <path d="M45.8 98.4 L48.8 101.6 L54.6 95.4"/>
 </g>
 <g stroke="#898989" stroke-width="1.6">
  <path d="M42.5 158.6 L48.0 169.2 L59.8 171.2 L51.4 179.7 L53.2 191.5 L42.5 186.2 L31.8 191.5 L33.6 179.7 L25.2 171.2 L37.0 169.2 Z"/>
  <rect x="26" y="244.2" width="32.4" height="25.6" rx="4"/>
  <path d="M38 251.4 V263 L48.4 257.2 Z"/>
  <path d="M38.6 270 L37.8 275.6 M45.8 270 L46.6 275.6 M34.4 275.8 H50.6"/>
  <circle cx="42.2" cy="678.8" r="16.2"/>
  <path d="M36.6 673.2 Q36.6 667 42.4 667 Q48 667 48 672.2 Q48 675.6 44.6 677.2 Q42.4 678.2 42.4 681.2 V682.6"/>
  <circle cx="42.4" cy="687.2" r="1.1"/>
  <path d="M54.9 849.6 L58.8 851.6 L56.5 857.0 L52.4 855.7 L50.0 858.1 L51.3 862.2 L45.9 864.5 L43.9 860.6 L40.5 860.6 L38.5 864.5 L33.1 862.2 L34.4 858.1 L32.0 855.7 L27.9 857.0 L25.6 851.6 L29.5 849.6 L29.5 846.2 L25.6 844.2 L27.9 838.8 L32.0 840.1 L34.4 837.7 L33.1 833.6 L38.5 831.3 L40.5 835.2 L43.9 835.2 L45.9 831.3 L51.3 833.6 L50.0 837.7 L52.4 840.1 L56.5 838.8 L58.8 844.2 L54.9 846.2 Z"/><circle cx="42.2" cy="847.9" r="6.9"/>
 </g>
 <g stroke="#e8523f" stroke-width="1.8">
  <path d="M37 769.6 A11.3 11.3 0 1 1 47 752.6"/>
  <path d="M46.8 755.4 A6.6 6.6 0 0 1 59.4 760.4"/>
  <circle cx="50.2" cy="771" r="9.4"/>
  <path d="M46.8 767.6 L53.6 774.4 M53.6 767.6 L46.8 774.4"/>
 </g>
 <g stroke="#7e7e7e">
  <path d="M39.4 941.3 V929 A8.75 8.75 0 0 1 56.9 929 V941.3" stroke-width="4.4" stroke-linecap="butt"/>
  <path d="M28.8 932.6 L38.7 939.3 L28.8 946.3" stroke-width="2"/>
 </g>
</g>
<g fill="#7e7e7e"><circle cx="28.8" cy="932.6" r="3.6"/><circle cx="38.7" cy="939.3" r="3.6"/><circle cx="28.8" cy="946.3" r="3.6"/></g>
</svg>
<!-- FRAME ICONS -->
<svg style="left:0;top:0" width="1920" height="979" viewBox="0 0 1920 979">
<g fill="none" stroke="#ececec" stroke-width="1.5" stroke-linecap="round" stroke-linejoin="round">
 <path d="M1764 99.5 L1769.4 94.1 M1764 94.4 V99.5 H1769.1 M1777.4 86 L1772 91.4 M1772.3 86 H1777.4 V91.1"/>
 <path d="M1815.4 86.1 L1828 98.7 M1828 86.1 L1815.4 98.7" stroke-width="1.6"/>
 <path d="M1745.8 155.4 L1751.4 149.4 L1757 155.4" stroke-width="1.3"/>
 <path d="M1785.6 157.4 L1789.8 153.2 M1785.6 153.8 V157.4 H1789.2 M1796.6 147 L1792.4 151.2 M1793 147 H1796.6 V150.6" stroke-width="1.3"/>
 <path d="M1825.6 147 L1836.8 157.6 M1836.8 147 L1825.6 157.6" stroke-width="1.3"/>
 <path d="M1706.2 157.6 L1710 153.8 M1708.6 150.8 L1713 155.2 M1709.8 152 L1713.6 148.6 L1712.6 147.6 L1714.4 146.6 L1717.8 150 L1716.8 151.8 L1715.8 150.8 L1712.4 154.6" stroke-width="1.3"/>
 <path d="M1769.3 184.6 L1771.4 189 L1776.4 189.6 L1772.7 193 L1773.7 198 L1769.3 195.5 L1764.9 198 L1765.9 193 L1762.2 189.6 L1767.2 189 Z" stroke-width="1.3"/>
 <path d="M1820.5 186 V194 M1817.2 190.8 L1820.5 194 L1823.8 190.8 M1813.4 193.4 V195.4 Q1813.4 196.8 1814.8 196.8 H1826.2 Q1827.6 196.8 1827.6 195.4 V193.4" stroke-width="1.3"/>
 <path d="M1811.8 242 L1820.6 250 L1811.8 258" stroke-width="1.6"/>
 <!-- graph tab icon -->
 <circle cx="503.1" cy="247.8" r="3.9"/>
 <circle cx="492.9" cy="242.4" r="2.5"/><circle cx="510.9" cy="239.8" r="2.5"/><circle cx="510.6" cy="253.3" r="2.5"/><circle cx="491.8" cy="258.9" r="2.5"/><circle cx="503.1" cy="258.6" r="2.5"/>
 <path d="M495.2 243.6 L499.6 246 M500.4 250.6 L493.6 257.2 M503.1 251.7 V256.1 M506.4 245.8 L509 242 M506.6 249.6 L508.4 251.4"/>
 <!-- table -->
 <rect x="489.6" y="312.4" width="23.8" height="18.2" rx="1.8" stroke-width="1.5"/>
 <path d="M489.6 318.6 H513.4 M489.6 324.8 H513.4 M501.5 312.4 V330.6" stroke-width="1.5"/>
 <!-- text A -->
 <path d="M502.4 383.4 L495 405.2 M502.4 383.4 L510 405.2 M497.6 397.6 H507.6 M492.6 405.4 H497.6 M507.4 405.4 H513" stroke-width="1.2"/>
 <!-- code -->
 <rect x="490.6" y="456.4" width="22" height="20.8" rx="1.8" stroke-width="1.5"/>
 <path d="M490.6 460.6 H512.6" stroke-width="1.5"/>
 <path d="M496.4 465.2 L499.8 468.8 L496.4 472.4 M501.2 472.2 H506.8" stroke-width="1.5"/>
 <!-- zoom controls -->
 <circle cx="1432.8" cy="696" r="5.8"/>
 <path d="M1437 700.2 L1441.2 704.4 M1430 696 H1435.6 M1432.8 693.2 V698.8"/>
 <circle cx="1432.8" cy="735.6" r="5.8"/>
 <path d="M1437 739.8 L1441.2 744 M1430 735.6 H1435.6"/>
 <path d="M1427.4 771 V769.8 Q1427.4 768.2 1429 768.2 H1430.2 M1438.4 768.2 H1439.6 Q1441.2 768.2 1441.2 769.8 V771 M1441.2 779.6 V780.8 Q1441.2 782.4 1439.6 782.4 H1438.4 M1430.2 782.4 H1429 Q1427.4 782.4 1427.4 780.8 V779.6"/>
 <rect x="1429.4" y="770.2" width="9.8" height="10.2" rx="1.2"/>
</g>
<svg style="left:1711px;top:84px" width="0" height="0"></svg>
</svg>
<!-- CHROME ICONS -->
<svg style="left:0;top:0" width="1920" height="979" viewBox="0 0 1920 979">
<g fill="none" stroke-linecap="round" stroke-linejoin="round">
 <path d="M25.5 23.2 H44.5 M25.5 23.2 L34 14.6 M25.5 23.2 L34 31.8" stroke="#8a8a8a" stroke-width="1.4"/>
 <path d="M99.4 24.6 A9.6 9.6 0 1 1 97.6 18.6" stroke="#fff" stroke-width="1.5"/>
 <path d="M98.6 14 V19.4 H92.8" stroke="#fff" stroke-width="1.5"/>
 <path d="M136.2 32.4 V23.5 L145 14.6 L153.8 23.5 V32.4 H148.6 V26.8 Q148.6 25.6 147.4 25.6 H142.6 Q141.4 25.6 141.4 26.8 V32.4 Z" stroke="#fff" stroke-width="1.5"/>
 <circle cx="212.4" cy="23.6" r="9.3" stroke="#fff" stroke-width="1.4"/>
 <path d="M212.4 21.6 V28.2" stroke="#fff" stroke-width="1.6"/>
 <!-- read aloud -->
 <path d="M1379.3 30.7 L1384.9 17.2 L1390.6 30.7 M1381.4 25.6 H1388.6" stroke="#a9a9a9" stroke-width="1.3"/>
 <path d="M1390.4 14.3 Q1396.2 17.4 1397 23.4" stroke="#a9a9a9" stroke-width="1.3"/>
 <path d="M1389.6 17.4 Q1393.2 19.6 1393.6 23" stroke="#a9a9a9" stroke-width="1.3"/>
 <!-- star in address -->
 <path d="M1437.4 14.9 L1440.4 20.5 L1446.6 21.6 L1442.3 26.2 L1443.1 32.4 L1437.4 29.7 L1431.7 32.4 L1432.5 26.2 L1428.2 21.6 L1434.4 20.5 Z" stroke="#a9a9a9" stroke-width="1.3"/>
 <!-- puzzle -->
 <path d="M1554.2 17.2 H1558.2 Q1558.6 14.2 1560.4 14.2 Q1562.2 14.2 1562.6 17.2 H1566.8 Q1567.2 17.2 1567.2 17.6 V21.6 Q1563.8 21.8 1563.8 23.8 Q1563.8 25.8 1567.2 26 V30 Q1567.2 30.4 1566.8 30.4 H1562.4 Q1561.6 33 1560 33 Q1558.4 33 1557.6 30.4 H1554.2 Q1553.8 30.4 1553.8 30 V25.8 Q1550.8 25.6 1550.8 23.7 Q1550.8 21.8 1553.8 21.6 V17.6 Q1553.8 17.2 1554.2 17.2 Z" stroke="#fff" stroke-width="1.4"/>
 <path d="M1589.8 14.2 V33.6" stroke="#5d5d5d" stroke-width="1.6"/>
 <!-- split -->
 <path d="M1617.2 16 H1612 Q1609.8 16 1609.8 18.2 V28.8 Q1609.8 31 1612 31 H1617.2 M1621.4 16 H1626.8 Q1629 16 1629 18.2 V28.8 Q1629 31 1626.8 31 H1621.4 M1619.3 13.8 V33.6" stroke="#fff" stroke-width="1.4"/>
 <!-- favorites -->
 <path d="M1675 14.8 L1677.6 20.2 L1682.6 20.6 M1678 24.6 H1685.2 M1678.2 28.6 H1685.2 M1678 20.5 H1685.2" stroke="#fff" stroke-width="1.4"/>
 <path d="M1675 14.8 L1672.4 20.2 L1665.2 21.2 L1670.2 26 L1669 32.4 L1674.8 29.4" stroke="#fff" stroke-width="1.4"/>
 <!-- collections -->
 <path d="M1723.6 30.6 Q1721.2 24 1720.6 19.4 Q1720.2 16.4 1723 16 L1731.2 15 Q1733.6 14.8 1734.2 17.6" stroke="#fff" stroke-width="1.4"/>
 <rect x="1726.2" y="19.9" width="13.8" height="13.7" rx="2.2" stroke="#fff" stroke-width="1.4"/>
 <path d="M1733.1 23.2 V30.4 M1729.5 26.8 H1736.7" stroke="#fff" stroke-width="1.5"/>
 <!-- heart -->
 <path d="M1779 28 L1784.6 33.4 M1775.6 24.6 Q1774 21.6 1775.2 18.6 Q1777 15.2 1780.6 15.4 Q1783.4 15.6 1785 18.4 Q1786.6 15.6 1789.6 15.4 Q1793.4 15.2 1794.8 18.8 Q1795.8 21.6 1794.6 24.5" stroke="#fff" stroke-width="1.4"/>
 <path d="M1774.9 24.5 H1778.8 L1781.2 19.6 L1784 28.6 L1786.8 22 L1788.6 24.5 H1795" stroke="#fff" stroke-width="1.4"/>
</g>
<circle cx="1790.7" cy="30.4" r="4.9" fill="#3db14e"/>
<path d="M1788.4 30.6 L1790 32 L1793 28.8" stroke="#1f3b22" stroke-width="1.2" fill="none"/>
<circle cx="212.4" cy="19" r="1.1" fill="#fff"/>
<circle cx="1833.3" cy="23.9" r="1.8" fill="#fff"/><circle cx="1840" cy="23.9" r="1.8" fill="#fff"/><circle cx="1846.6" cy="23.9" r="1.8" fill="#fff"/>
<!-- avatar -->
<circle cx="1504" cy="23" r="10" fill="#b31fcf"/>
<circle cx="1504" cy="23" r="9.2" fill="none" stroke="#c657db" stroke-width="0.8" stroke-dasharray="1 2"/>
<path d="M1499.8 16.6 V28.2 H1505.2 M1503.6 28.6 V18.4 H1507 Q1509.6 18.4 1509.6 21 Q1509.6 23.6 1507 23.6 H1504 L1509.6 29.2" stroke="#fff" stroke-width="2" fill="none"/>
<!-- copilot -->
<defs>
<linearGradient id="cpA" x1="0" y1="0" x2="0" y2="1"><stop offset="0" stop-color="#0fb2e6"/><stop offset="1" stop-color="#3fd6a2"/></linearGradient>
<linearGradient id="cpB" x1="0" y1="0" x2="1" y2="1"><stop offset="0" stop-color="#2f8ff0"/><stop offset="1" stop-color="#1b5fe0"/></linearGradient>
</defs>
<linearGradient id="cpC" x1="0" y1="0" x2="0" y2="1"><stop offset="0" stop-color="#2a7fe6"/><stop offset="1" stop-color="#15b4f2"/></linearGradient>
<path d="M1895.4 11.2 H1899.6 Q1901.4 11.2 1902 13.4 L1903 18.4 H1897 Z" fill="#0f6aa8"/>
<path d="M1885.6 29.4 H1891.8 L1890.6 37.2 H1888.8 Q1886.6 37.2 1886.2 35 Z" fill="#1f4fd8"/>
<path d="M1886.2 11 H1895.8 Q1896.6 11 1896.4 11.8 L1891 28.2 Q1890.6 29.6 1889 29.6 H1880.2 Q1878 29.6 1878.4 27.4 L1882.4 14.2 Q1883.4 11 1886.2 11 Z" fill="url(#cpA)"/>
<path d="M1898.6 18.2 H1905.4 Q1908 18.2 1907.4 20.8 L1903.6 34.2 Q1902.8 37.2 1899.8 37.2 H1891.4 Q1890.6 37.2 1890.8 36.4 L1896.6 19.8 Q1897.2 18.2 1898.6 18.2 Z" fill="url(#cpC)"/>
<!-- right sidebar -->
<circle cx="1889.4" cy="73.4" r="6.2" fill="none" stroke="#bdbdbd" stroke-width="2.2"/>
<path d="M1895.4 79.6 L1900.6 84.4" stroke="#b57be0" stroke-width="3.4" stroke-linecap="round"/>
<path d="M1903 118.2 Q1903 116 1900.8 116 H1894 L1883.8 126.2 Q1882.8 127.2 1883.8 128.2 L1890.8 135.2 Q1891.8 136.2 1892.8 135.2 L1903 125 Z" fill="#5b8ff0"/>
<circle cx="1898.4" cy="120.4" r="2" fill="#fff"/><circle cx="1898.4" cy="120.4" r="1" fill="#4a7ad6"/>
<path d="M1888.6 169.2 V166.8 Q1888.6 165.6 1889.8 165.6 H1896.6 Q1897.8 165.6 1897.8 166.8 V169.2" stroke="#c9c9c9" stroke-width="1.4" fill="none"/>
<rect x="1882" y="169" width="22.4" height="15.6" rx="1.8" fill="#e8601c"/>
<rect x="1882" y="169" width="22.4" height="4.6" rx="1.2" fill="#f47a36"/>
<circle cx="1893.2" cy="176.4" r="1.8" fill="#bdbdbd"/>
<circle cx="1889.4" cy="217.6" r="3" fill="#bdbdbd"/><path d="M1886 221.4 H1892.8 L1891.8 223.2 Q1893 228 1894 230.8 H1884.8 Q1885.8 228 1887 223.2 Z" fill="#bdbdbd"/><rect x="1882.6" y="230.2" width="13.6" height="3.6" rx="1.6" fill="#9e9e9e"/>
<path d="M1894.8 214 H1897 V216 H1898.8 V214 H1901 V216 H1902.8 V214 H1904.6 V219 L1903 220.6 V227.6 L1905 230.4 H1894.2 L1896.6 227.6 V220.6 L1894.8 219 Z" fill="#a96ee0"/>
<path d="M1892.8 265.8 L1901.6 270.8 V281 L1892.8 286 L1884 281 V270.8 Z" fill="#8a5ed6"/>
<path d="M1892.8 265.8 L1901.6 270.8 V276 L1896.6 273.2 Z" fill="#3aa3e8"/>
<path d="M1884 281 L1892.8 286 L1901.6 281 L1896.6 278.4 L1892.8 280.6 L1887.6 277.6 Z" fill="#b372e6"/>
<circle cx="1892.8" cy="275.9" r="4" fill="#3b3b3b"/>
<rect x="1889.4" y="316.4" width="13.8" height="19.6" rx="1.5" fill="#28a8ea"/>
<path d="M1889.4 326 L1903.2 326 V335 Q1903.2 336 1902.2 336 H1890.4 Q1889.4 336 1889.4 335 Z" fill="#0f78d4"/>
<rect x="1883" y="320.4" width="12" height="12" rx="1.4" fill="#0f6cbd"/>
<circle cx="1889" cy="326.4" r="3.5" fill="none" stroke="#fff" stroke-width="1.6"/>
<path d="M1881.8 373 L1903.4 368.8 L1892.4 383.2 L1891 377.4 Z" fill="#2ea7e8"/>
<path d="M1891 377.4 L1903.4 368.8 L1892.4 383.2 Z" fill="#1479c4"/>
<path d="M1875 416.3 H1910" stroke="#565656" stroke-width="1.2"/>
<path d="M1891.8 448.4 V463 M1884.5 455.7 H1899" stroke="#cfcfcf" stroke-width="1.4"/>
<circle cx="1908.7" cy="442.8" r="3.8" fill="#f29a94"/>
<path d="M1875 924.3 H1910" stroke="#565656" stroke-width="1.2"/>
<path d="M1899.4 950.0 L1902.4 950.4 L1902.4 954.2 L1899.4 954.6 L1899.0 955.7 L1900.9 958.0 L1898.1 960.8 L1895.8 958.9 L1894.7 959.3 L1894.3 962.3 L1890.5 962.3 L1890.1 959.3 L1889.0 958.9 L1886.7 960.8 L1883.9 958.0 L1885.8 955.7 L1885.4 954.6 L1882.4 954.2 L1882.4 950.4 L1885.4 950.0 L1885.8 948.9 L1883.9 946.6 L1886.7 943.8 L1889.0 945.7 L1890.1 945.3 L1890.5 942.3 L1894.3 942.3 L1894.7 945.3 L1895.8 945.7 L1898.1 943.8 L1900.9 946.6 L1899.0 948.9 Z" fill="none" stroke="#fff" stroke-width="1.4" stroke-linejoin="round"/><circle cx="1892.4" cy="952.3" r="2.7" fill="none" stroke="#fff" stroke-width="1.4"/>
</svg>
</body></html>
